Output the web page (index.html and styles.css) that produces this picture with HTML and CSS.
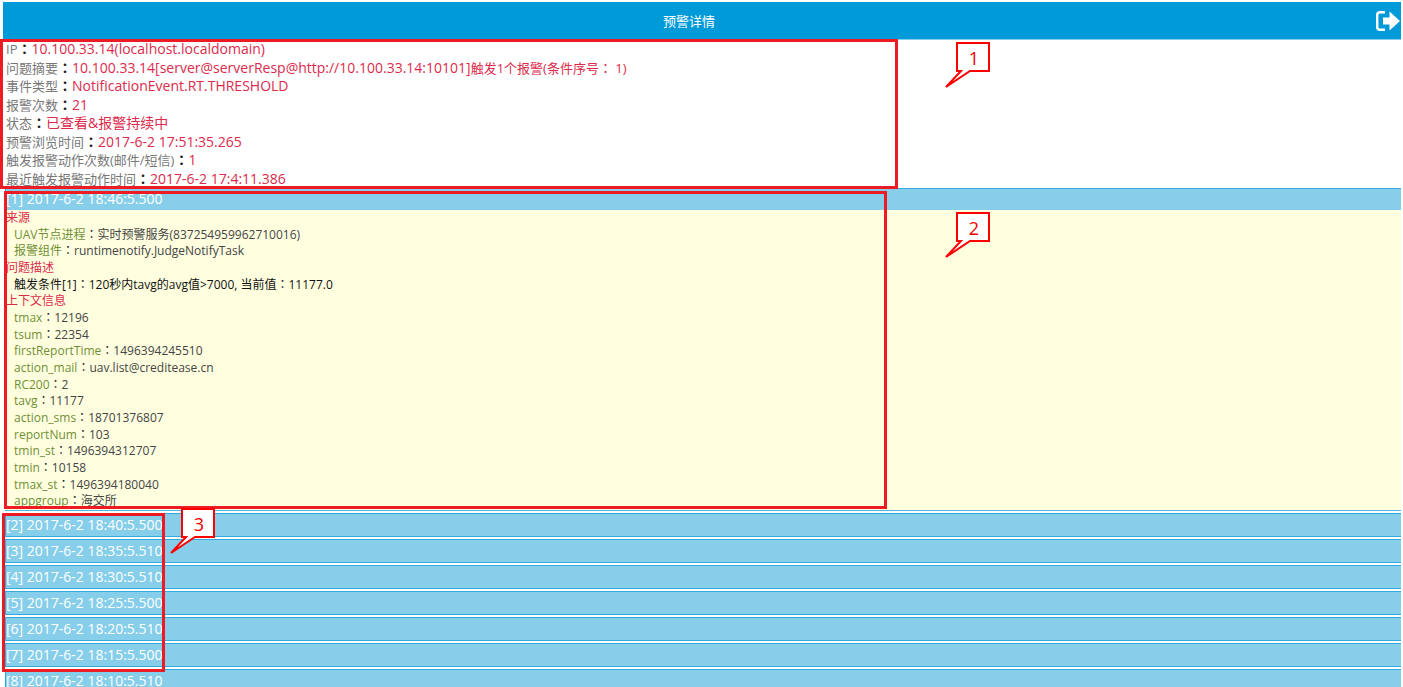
FILE: index.html
```html
<!DOCTYPE html>
<html lang="zh-CN">
<head>
<meta charset="utf-8">
<title>预警详情</title>
<link rel="stylesheet" href="styles.css">
</head>
<body>
<div class="page">
  <header class="topbar">
    <h1 class="title">预警详情</h1>
    <button class="exit" type="button" aria-label="退出">
      <svg viewBox="0 0 26 22" width="26" height="22"><path d="M10 2.200H5Q2.200 2.200 2.200 5V17Q2.200 19.800 5 19.800H10" fill="none" stroke="#fff" stroke-width="2.400"/><path d="M8 7.500H14.500V1.500L25 11L14.500 20.500V14.500H8Z" fill="#fff"/></svg>
    </button>
  </header>

  <section class="summary">
    <div><span class="key">IP</span><b class="colon" lang="zh-TW">：</b>10.100.33.14(localhost.localdomain)</div>
    <div><span class="key">问题摘要</span><b class="colon" lang="zh-TW">：</b>10.100.33.14[server@serverResp@http://10.100.33.14:10101]<span class="cause">触发1个报警(条件序号<span class="mid" lang="zh-TW">：</span> 1)</span></div>
    <div><span class="key">事件类型</span><b class="colon" lang="zh-TW">：</b>NotificationEvent.RT.THRESHOLD</div>
    <div><span class="key">报警次数</span><b class="colon" lang="zh-TW">：</b>21</div>
    <div><span class="key">状态</span><b class="colon" lang="zh-TW">：</b>已查看&amp;报警持续中</div>
    <div><span class="key">预警浏览时间</span><b class="colon" lang="zh-TW">：</b>2017-6-2 17:51:35.265</div>
    <div><span class="key">触发报警动作次数(邮件/短信)</span><b class="colon" lang="zh-TW">：</b>1</div>
    <div><span class="key">最近触发报警动作时间</span><b class="colon" lang="zh-TW">：</b>2017-6-2 17:4:11.386</div>
  </section>

  <main class="events">
    <article class="event open">
      <button class="bar" type="button">[1] 2017-6-2 18:46:5.500</button>
      <div class="detail">
        <h2 class="group">来源</h2>
        <div class="item"><span class="name">UAV节点进程</span><span class="colon" lang="zh-TW">：</span>实时预警服务(837254959962710016)</div>
        <div class="item"><span class="name">报警组件</span><span class="colon" lang="zh-TW">：</span>runtimenotify.JudgeNotifyTask</div>
        <h2 class="group">问题描述</h2>
        <div class="item strong">触发条件[1]<span class="colon" lang="zh-TW">：</span>120秒内tavg的avg值&gt;7000, 当前值<span class="colon" lang="zh-TW">：</span>11177.0</div>
        <h2 class="group">上下文信息</h2>
        <div class="item"><span class="name">tmax</span><span class="colon" lang="zh-TW">：</span>12196</div>
        <div class="item"><span class="name">tsum</span><span class="colon" lang="zh-TW">：</span>22354</div>
        <div class="item"><span class="name">firstReportTime</span><span class="colon" lang="zh-TW">：</span>1496394245510</div>
        <div class="item"><span class="name">action_mail</span><span class="colon" lang="zh-TW">：</span>uav.list@creditease.cn</div>
        <div class="item"><span class="name">RC200</span><span class="colon" lang="zh-TW">：</span>2</div>
        <div class="item"><span class="name">tavg</span><span class="colon" lang="zh-TW">：</span>11177</div>
        <div class="item"><span class="name">action_sms</span><span class="colon" lang="zh-TW">：</span>18701376807</div>
        <div class="item"><span class="name">reportNum</span><span class="colon" lang="zh-TW">：</span>103</div>
        <div class="item"><span class="name">tmin_st</span><span class="colon" lang="zh-TW">：</span>1496394312707</div>
        <div class="item"><span class="name">tmin</span><span class="colon" lang="zh-TW">：</span>10158</div>
        <div class="item"><span class="name">tmax_st</span><span class="colon" lang="zh-TW">：</span>1496394180040</div>
        <div class="item"><span class="name">appgroup</span><span class="colon" lang="zh-TW">：</span>海交所</div>
      </div>
    </article>
    <article class="event"><button class="bar" type="button">[2] 2017-6-2 18:40:5.500</button></article>
    <article class="event"><button class="bar" type="button">[3] 2017-6-2 18:35:5.510</button></article>
    <article class="event"><button class="bar" type="button">[4] 2017-6-2 18:30:5.510</button></article>
    <article class="event"><button class="bar" type="button">[5] 2017-6-2 18:25:5.500</button></article>
    <article class="event"><button class="bar" type="button">[6] 2017-6-2 18:20:5.510</button></article>
    <article class="event"><button class="bar" type="button">[7] 2017-6-2 18:15:5.500</button></article>
    <article class="event"><button class="bar" type="button">[8] 2017-6-2 18:10:5.510</button></article>
  </main>

  <div class="frame frame-1"></div>
  <div class="frame frame-2"></div>
  <div class="frame frame-3"></div>
  <div class="note note-1"><svg viewBox="0 0 46 47" width="46" height="47"><path d="M12 1H44V29H25L1 45L16 29H12Z"/></svg><span>1</span></div>
  <div class="note note-2"><svg viewBox="0 0 46 47" width="46" height="47"><path d="M12 1H44V29H25L1 45L16 29H12Z"/></svg><span>2</span></div>
  <div class="note note-3"><svg viewBox="0 0 46 47" width="46" height="47"><path d="M12 1H44V29H25L1 45L16 29H12Z"/></svg><span>3</span></div>
</div>
</body>
</html>
```
FILE: styles.css
```css
* { box-sizing: border-box; }
body {
  margin: 0;
  background: #fff;
  font-family: "Open Sans", "Noto Sans CJK SC", sans-serif;
  font-size: 14px;
}
.page {
  position: relative;
  height: 100vh;
  overflow: hidden;
  padding: 2px 2px 0 3px;
}
.topbar {
  display: flex;
  align-items: center;
  height: 38px;
  background: #009ad8;
  border-bottom: 1px solid #87ceeb;
  color: #fff;
}
.title {
  flex: 1;
  margin: 0;
  font-size: 13px;
  font-weight: 400;
  text-align: center;
}
.exit {
  display: flex;
  padding: 0;
  border: 0;
  background: none;
}
.summary {
  display: grid;
  grid-auto-rows: 1fr;
  height: 148px;
  padding-left: 3px;
  line-height: 17px;
  color: #dc2a4c;
  white-space: nowrap;
}
.key { font-size: 13px; color: #777; }
.cause { font-size: 13px; }
.colon, .mid { font-family: "Noto Sans CJK TC", sans-serif; line-height: 1; }
.colon { color: #222; }
.events {
  display: flex;
  flex-direction: column;
  gap: 2px;
  padding-left: 2px;
}
.bar {
  display: block;
  width: 100%;
  height: 24px;
  padding: 0 0 1px;
  border: 1px solid #36a9dc;
  border-right: 0;
  background: #87ceeb;
  color: #fff;
  font: inherit;
  line-height: 20px;
  text-align: left;
}
.open {
  border-bottom: 1px solid #4db8e5;
}
.open .bar {
  height: 22px;
  border-bottom: 0;
}
.detail {
  display: grid;
  grid-auto-rows: 1fr;
  height: 300px;
  overflow: hidden;
  padding-left: 1px;
  background: #ffffe0;
  font-size: 12px;
  line-height: 16px;
  color: #444;
  white-space: nowrap;
}
.detail .colon { line-height: 0; }
.group {
  margin: 0;
  font-size: 12px;
  font-weight: 400;
  color: #dc2a4c;
}
.item { padding-left: 8px; }
.strong { color: #111; }
.name { color: #6f8f35; }
.frame {
  position: absolute;
  border: 3px solid #ed1c24;
}
.frame-1 { left: 0; top: 39px; width: 898px; height: 150px; }
.frame-2 { left: 4px; top: 191px; width: 883px; height: 318px; }
.frame-3 { left: 2px; top: 513px; width: 163px; height: 159px; }
.note {
  position: absolute;
  width: 46px;
  height: 47px;
  color: #e00;
}
.note svg { display: block; }
.note path { fill: #fff; stroke: #f00; stroke-width: 2; }
.note span {
  position: absolute;
  left: 13px;
  top: 1px;
  width: 32px;
  font-size: 18px;
  line-height: 30px;
  text-align: center;
}
.note-1 { left: 945px; top: 42px; }
.note-2 { left: 945px; top: 212px; }
.note-3 { left: 170px; top: 508px; }
```
